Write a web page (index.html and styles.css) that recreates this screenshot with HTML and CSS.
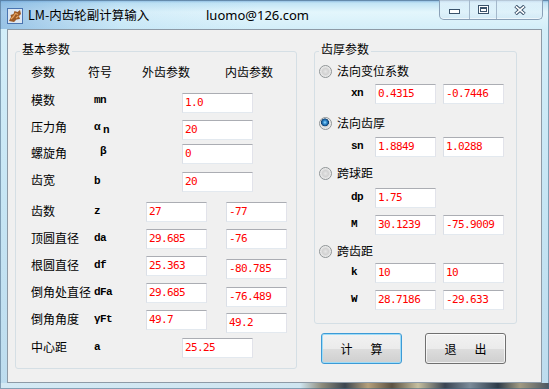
FILE: index.html
```html
<!DOCTYPE html>
<html lang="zh-CN">

<head>
    <meta charset="UTF-8">
    <title>LM-内齿轮副计算输入</title>
    <link rel="stylesheet" href="styles.css">
</head>

<body>
    <div class="window">
        <div class="titlebar">
            <svg class="app-icon" width="16" height="16" viewBox="0 0 16 16">
                <rect x="0.5" y="0.5" width="15" height="15" fill="#dce7f3" stroke="#4a74b0" />
                <path d="M2 13 L4 9 L3.5 7 L6.5 6 L7.5 3 L10.5 4 L13 2 L14 6 L12 8 L13 11 L9.5 11.5 L7 14 Z" fill="#9c5a26" />
                <path d="M4 11 L6.5 8.5 L8.5 5.5 L11 6.5 M9 10 L11.5 8" stroke="#e8a45e" stroke-width="1.2" fill="none" />
            </svg>
            <span class="title">LM-内齿轮副计算输入</span>
            <span class="email">luomo@126.com</span>
            <div class="caption">
                <span class="cap-btn cap-btn--min">
                    <svg width="11" height="9" viewBox="0 0 11 9">
                        <rect x="0.5" y="4.5" width="10" height="4" fill="#fff" stroke="#3b536b" />
                    </svg>
                </span>
                <span class="cap-btn cap-btn--max">
                    <svg width="11" height="9" viewBox="0 0 11 9">
                        <rect x="0.5" y="0.5" width="10" height="8" fill="#fff" stroke="#3b536b" />
                        <rect x="2.5" y="2.5" width="6" height="4" fill="#fff" stroke="#3b536b" />
                        <rect x="2" y="2" width="7" height="2" fill="#3b536b" />
                    </svg>
                </span>
                <span class="cap-btn cap-btn--close">
                    <svg width="12" height="10" viewBox="0 0 12 10">
                        <path d="M1.5 1 L10.5 9 M10.5 1 L1.5 9" stroke="#3b536b" stroke-width="3.6" />
                        <path d="M1.8 1.3 L10.2 8.7 M10.2 1.3 L1.8 8.7" stroke="#fff" stroke-width="1.6" />
                    </svg>
                </span>
            </div>
        </div>

        <div class="client">
            <fieldset class="group group--basic">
                <legend>基本参数</legend>
                <div class="head">
                    <span class="head__name">参数</span>
                    <span class="head__sym">符号</span>
                    <span class="head__ext">外齿参数</span>
                    <span>内齿参数</span>
                </div>

                <div class="row row--27">
                    <span class="label label--hi">模数</span>
                    <span class="sym sym--hi">mn</span>
                    <input class="field field--wide" value="1.0">
                </div>
                <div class="row row--24">
                    <span class="label label--hi">压力角</span>
                    <span class="sym sym--hi">α<sub>n</sub></span>
                    <input class="field field--wide" value="20">
                </div>
                <div class="row row--28">
                    <span class="label">螺旋角</span>
                    <span class="sym sym--hi">&nbsp;β</span>
                    <input class="field field--wide" value="0">
                </div>
                <div class="row row--30">
                    <span class="label label--mid">齿宽</span>
                    <span class="sym">b</span>
                    <input class="field field--wide" value="20">
                </div>
                <div class="row row--27">
                    <span class="label">齿数</span>
                    <span class="sym">z</span>
                    <input class="field" value="27">
                    <input class="field" value="-77">
                </div>
                <div class="row row--27">
                    <span class="label">顶圆直径</span>
                    <span class="sym">da</span>
                    <input class="field" value="29.685">
                    <input class="field" value="-76">
                </div>
                <div class="row row--27">
                    <span class="label">根圆直径</span>
                    <span class="sym">df</span>
                    <input class="field" value="25.363">
                    <input class="field field--low" value="-80.785">
                </div>
                <div class="row row--27">
                    <span class="label">倒角处直径</span>
                    <span class="sym">dFa</span>
                    <input class="field" value="29.685">
                    <input class="field field--lower" value="-76.489">
                </div>
                <div class="row row--28">
                    <span class="label">倒角角度</span>
                    <span class="sym">γFt</span>
                    <input class="field" value="49.7">
                    <input class="field field--low" value="49.2">
                </div>
                <div class="row row--29">
                    <span class="label">中心距</span>
                    <span class="sym">a</span>
                    <input class="field field--wide" value="25.25">
                </div>
            </fieldset>

            <div class="side">
                <fieldset class="group group--thick">
                    <legend>齿厚参数</legend>

                    <label class="opt opt--1"><input type="radio" name="mode" class="radio">法向变位系数</label>
                    <div class="pair pair--6">
                        <span class="pair__sym">xn</span>
                        <input class="field" value="0.4315">
                        <input class="field" value="-0.7446">
                    </div>

                    <label class="opt opt--12"><input type="radio" name="mode" class="radio" checked>法向齿厚</label>
                    <div class="pair pair--7">
                        <span class="pair__sym">sn</span>
                        <input class="field" value="1.8849">
                        <input class="field" value="1.0288">
                    </div>

                    <label class="opt opt--9"><input type="radio" name="mode" class="radio">跨球距</label>
                    <div class="pair pair--8">
                        <span class="pair__sym">dp</span>
                        <input class="field" value="1.75">
                    </div>
                    <div class="pair pair--7">
                        <span class="pair__sym">M</span>
                        <input class="field" value="30.1239">
                        <input class="field" value="-75.9009">
                    </div>

                    <label class="opt opt--9"><input type="radio" name="mode" class="radio">跨齿距</label>
                    <div class="pair pair--5">
                        <span class="pair__sym">k</span>
                        <input class="field" value="10">
                        <input class="field" value="10">
                    </div>
                    <div class="pair pair--7">
                        <span class="pair__sym">W</span>
                        <input class="field" value="28.7186">
                        <input class="field" value="-29.633">
                    </div>
                </fieldset>

                <div class="actions">
                    <button class="btn btn--default"><span>计</span><span>算</span></button>
                    <button class="btn"><span>退</span><span>出</span></button>
                </div>
            </div>
        </div>
    </div>
</body>

</html>
```

FILE: styles.css
```css
* {
    box-sizing: border-box;
}

html,
body {
    margin: 0;
    padding: 0;
    width: 549px;
    height: 389px;
    overflow: hidden;
}

body {
    font-family: "Noto Sans CJK SC", sans-serif;
    font-size: 12px;
    color: #000;
}

.window {
    width: 549px;
    height: 389px;
    display: flex;
    flex-direction: column;
    box-shadow: inset 0 0 0 1px rgba(70, 100, 130, 0.55);
    background:
        linear-gradient(90deg, #d4e9f4 0, #cfe5f0 300px, #8d8b7b 322px, #3c4650 345px, #b6a07b 368px, #5b5142 392px, #c6bf9f 418px, #3a4452 445px, #7b8b99 470px, #2d3b49 498px, #a19a82 520px, #4b5661 549px) left bottom / 100% 6px no-repeat,
        linear-gradient(90deg, rgba(90, 150, 210, 0.5) 0, rgba(150, 200, 235, 0.2) 120px, rgba(255, 255, 255, 0) 260px) left top / 100% 29px no-repeat,
        linear-gradient(180deg, #7fb0dc 0, #c2e4f5 3px, #e3f6fc 12px, #d3eef9 29px, #c6e5f4 200px, #bddcee 100%);
}

/* title bar */

.titlebar {
    height: 29px;
    display: flex;
    align-items: flex-start;
    padding-left: 7px;
    flex: none;
}

.app-icon {
    flex: none;
    margin-top: 8px;
}

.title {
    width: 178px;
    margin-left: 5px;
    padding-top: 8px;
    line-height: 14px;
    font-size: 12.5px;
    white-space: nowrap;
}

.email {
    padding-top: 8px;
    line-height: 14px;
    font-family: "Noto Sans", sans-serif;
    font-size: 13px;
}

.caption {
    margin-left: auto;
    margin-right: 6px;
    display: flex;
    height: 20px;
    border: 1px solid #8aa1b8;
    border-top: none;
    border-radius: 0 0 5px 5px;
    overflow: hidden;
    background: linear-gradient(180deg, rgba(255, 255, 255, 0.55), rgba(225, 240, 250, 0.35) 50%, rgba(200, 225, 240, 0.45));
    box-shadow: inset 0 -1px 0 rgba(255, 255, 255, 0.6);
}

.cap-btn {
    display: flex;
    align-items: center;
    justify-content: center;
    border-left: 1px solid #a4b8cb;
}

.cap-btn--min {
    width: 29px;
    border-left: none;
}

.cap-btn--max {
    width: 27px;
}

.cap-btn--close {
    width: 46px;
}

/* client area */

.client {
    flex: 1;
    margin: 0 7px 6px 7px;
    background-color: #f0f0f0;
    border: 1px solid #8d9aa6;
    display: flex;
    gap: 17px;
    padding: 13px 0 0 7px;
}

.group {
    margin: 0;
    padding: 0;
    min-width: 0;
    border: 1px solid #d5dfe5;
    border-radius: 3px;
}

.group legend {
    margin-left: 4px;
    padding: 0 2px 4px;
    line-height: 12px;
    font-size: 12px;
}

.group--basic {
    width: 282px;
    height: 326px;
}

.head {
    display: flex;
    height: 34px;
    padding: 6px 0 0 15px;
    line-height: 14px;
}

.head__name {
    width: 57px;
}

.head__sym {
    width: 54px;
}

.head__ext {
    width: 83px;
}

.row {
    display: flex;
    align-items: flex-start;
    padding-left: 15px;
}

.row--24 { height: 24px; }
.row--27 { height: 27px; }
.row--28 { height: 28px; }
.row--29 { height: 29px; }
.row--30 { height: 30px; }

.label {
    width: 63px;
    flex: none;
    padding-top: 2px;
    line-height: 14px;
    white-space: nowrap;
}

.label--hi {
    padding-top: 0;
}

.label--mid {
    padding-top: 1px;
}

.sym {
    width: 52px;
    flex: none;
    padding-top: 2px;
    line-height: 14px;
    font-family: "Liberation Mono", monospace;
    font-weight: bold;
    font-size: 11px;
    letter-spacing: -0.6px;
}

.sym--hi {
    padding-top: 0;
}

.sym sub {
    font-size: 11px;
    vertical-align: -3px;
    margin-left: 3px;
}

.field {
    width: 61px;
    height: 20px;
    flex: none;
    margin: 0;
    padding: 0 0 2px 2px;
    border: 1px solid;
    border-color: #abadb3 #e2e3ea #e3e9ef #dbdfe6;
    border-radius: 0;
    background-color: #fff;
    color: #f00;
    font-family: "DejaVu Sans Mono", monospace;
    font-size: 11px;
    letter-spacing: -0.6px;
    outline: none;
}

.row .field + .field {
    margin-left: 19px;
}

.field--wide {
    width: 71px;
    margin-left: 36px;
}

.field--low {
    margin-top: 3px;
}

.field--lower {
    margin-top: 4px;
}

/* right column */

.side {
    display: flex;
    flex-direction: column;
}

.group--thick {
    width: 203px;
    height: 281px;
}

.opt {
    display: flex;
    align-items: center;
    gap: 5px;
    height: 14px;
    line-height: 14px;
    padding-left: 4px;
}

.opt--1 { margin-top: 5px; }
.opt--9 { margin-top: 9px; }
.opt--12 { margin-top: 12px; }

.radio {
    appearance: none;
    -webkit-appearance: none;
    width: 13px;
    height: 13px;
    margin: 0;
    flex: none;
    border: 1px solid #8f9496;
    border-radius: 50%;
    background: radial-gradient(circle at 50% 50%, #e6e6e6 0, #d2d2d2 3px, #f4f4f4 6px);
}

.radio:checked {
    background:
        radial-gradient(circle at 45% 40%, #9fe0ff 0, #3a94d6 1.6px, #1b5f9c 3px, #0d3f6e 3.7px, rgba(0, 0, 0, 0) 4.2px),
        radial-gradient(circle at 50% 50%, #e6e6e6 0, #d2d2d2 3px, #f4f4f4 6px);
}

.pair {
    display: flex;
    height: 20px;
    padding-left: 36px;
}

.pair--5 { margin-top: 5px; }
.pair--6 { margin-top: 6px; }
.pair--7 { margin-top: 7px; }
.pair--8 { margin-top: 8px; }

.pair__sym {
    width: 24px;
    flex: none;
    line-height: 18px;
    font-family: "Liberation Mono", monospace;
    font-weight: bold;
    font-size: 11px;
    letter-spacing: -0.6px;
}

.pair .field + .field {
    margin-left: 7px;
}

.actions {
    display: flex;
    gap: 23px;
    margin-top: 9px;
    padding-left: 7px;
}

.btn {
    width: 81px;
    height: 31px;
    display: flex;
    align-items: center;
    justify-content: center;
    gap: 18px;
    margin: 0;
    padding: 0;
    border: 1px solid #707070;
    border-radius: 3px;
    background: linear-gradient(180deg, #f2f2f2 0, #ebebeb 50%, #dddddd 50%, #cfcfcf 100%);
    box-shadow: inset 0 0 0 1px rgba(255, 255, 255, 0.7);
    font-family: "Noto Sans CJK SC", sans-serif;
    font-size: 12px;
    color: #000;
}

.btn--default {
    border-color: #3c9ad6;
    box-shadow: inset 0 0 0 1px #9fdcf7;
}
```
